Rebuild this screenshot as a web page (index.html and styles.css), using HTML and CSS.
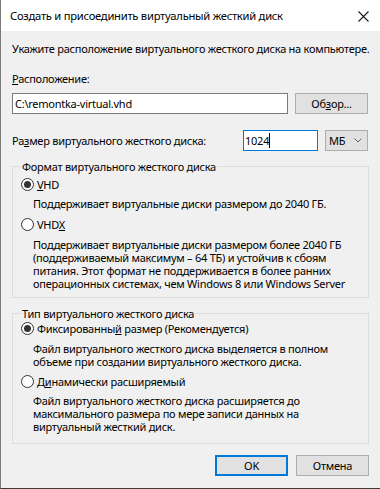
FILE: index.html
```html
<!DOCTYPE html>
<html lang="ru">
<head>
  <meta charset="UTF-8" />
  <title>Создать и присоединить виртуальный жесткий диск</title>
  <link rel="stylesheet" href="styles.css">
</head>
<body>
  <div class="window">
    <div class="titlebar">
      <span class="title">Создать и присоединить виртуальный жесткий диск</span>
      <svg class="close" width="11" height="11" viewBox="0 0 11 11">
        <path d="M0.5 0.5 L10.5 10.5 M10.5 0.5 L0.5 10.5" stroke="#1a1a1a" stroke-width="1.1" fill="none"/>
      </svg>
    </div>

    <div class="content">
      <p class="intro">Укажите расположение виртуального жесткого диска на компьютере.</p>

      <label class="field-label"><u>Р</u>асположение:</label>
      <div class="path-row">
        <div class="textbox path">C:\remontka-virtual.vhd</div>
        <button class="btn">Об<u>з</u>ор...</button>
      </div>

      <div class="size-row">
        <span class="size-label">Ра<u>з</u>мер виртуального жесткого диска:</span>
        <div class="textbox size focused">1024<span class="caret"></span></div>
        <div class="combo">
          <span>МБ</span>
          <svg width="8" height="5" viewBox="0 0 8 5"><path d="M0.5 0.5 L4 4 L7.5 0.5" stroke="#606060" fill="none"/></svg>
        </div>
      </div>

      <fieldset class="group format">
        <legend>Формат виртуального жесткого диска</legend>
        <div class="option first">
          <span class="radio checked"></span><span><u>V</u>HD</span>
        </div>
        <p class="desc d1">Поддерживает виртуальные диски размером до 2040 ГБ.</p>
        <div class="option second">
          <span class="radio"></span><span>VHD<u>X</u></span>
        </div>
        <p class="desc d2">Поддерживает виртуальные диски размером более 2040 ГБ<br>(поддерживаемый максимум – 64 ТБ) и устойчив к сбоям<br>питания. Этот формат не поддерживается в более ранних<br>операционных системах, чем Windows 8 или Windows Server</p>
      </fieldset>

      <fieldset class="group type">
        <legend>Тип виртуального жесткого диска</legend>
        <div class="option first">
          <span class="radio checked"></span><span>Фиксированны<u>й</u> размер (Рекомендуется)</span>
        </div>
        <p class="desc d1">Файл виртуального жесткого диска выделяется в полном<br>объеме при создании виртуального жесткого диска.</p>
        <div class="option second">
          <span class="radio"></span><span>Д<u>и</u>намически расширяемый</span>
        </div>
        <p class="desc d2">Файл виртуального жесткого диска расширяется до<br>максимального размера по мере записи данных на<br>виртуальный жесткий диск.</p>
      </fieldset>

      <div class="actions">
        <button class="btn default">OK</button>
        <button class="btn">Отмена</button>
      </div>
    </div>
  </div>
</body>
</html>
```

FILE: styles.css
```css
* {
  box-sizing: border-box;
}
html, body {
  margin: 0;
  padding: 0;
}
body {
  font-family: "Noto Sans", "Open Sans", sans-serif;
  font-size: 11px;
  line-height: 13px;
  letter-spacing: -0.25px;
  color: #000;
  background: #f0f0f0;
  white-space: nowrap;
}
u {
  text-decoration-thickness: 1px;
  text-underline-offset: 1px;
}
.window {
  width: 380px;
  height: 489px;
  background: #f0f0f0;
  border-left: 1px solid #7a7a7a;
  border-bottom: 1px solid #3a3a3a;
  display: flex;
  flex-direction: column;
  overflow: hidden;
}
.titlebar {
  flex: none;
  height: 31px;
  background: #fff;
  display: flex;
  align-items: center;
  justify-content: space-between;
  padding: 0 11px 0 9px;
}
.title {
  font-size: 11.2px;
}
.close {
  margin-top: 1px;
}
.content {
  padding: 11px 11px 0 11px;
}
.intro {
  margin: 0;
}
.field-label {
  display: block;
  margin-top: 17px;
}
.path-row {
  display: flex;
  gap: 7px;
  margin-top: 8px;
  height: 21px;
}
.textbox {
  background: #fff;
  border: 1px solid #7a7a7a;
  height: 21px;
  padding: 0 2px;
  display: flex;
  align-items: center;
}
.textbox.focused {
  border-color: #0078d7;
}
.path {
  width: 276px;
}
.btn {
  font: inherit;
  letter-spacing: inherit;
  color: #000;
  background: #e1e1e1;
  border: 1px solid #adadad;
  width: 73px;
  height: 21px;
  padding: 0;
  line-height: 13px;
}
.btn.default {
  border: 2px solid #0078d7;
}
.size-row {
  display: flex;
  align-items: center;
  margin-top: 16px;
  height: 21px;
}
.size-label {
  width: 231px;
}
.size {
  width: 75px;
  padding-left: 1px;
}
.caret {
  display: inline-block;
  width: 1px;
  height: 15px;
  background: #000;
}
.combo {
  margin-left: 7px;
  width: 43px;
  height: 21px;
  background: #e1e1e1;
  border: 1px solid #adadad;
  display: flex;
  align-items: center;
  justify-content: space-between;
  padding: 0 5px 0 3px;
}
.group {
  margin: 0;
  padding: 0 8px 7px;
  border: 1px solid #dcdcdc;
  min-width: 0;
}
.group legend {
  padding: 0 1px;
  line-height: 13px;
}
.format {
  margin-top: 9px;
}
.type {
  margin-top: 9px;
  padding-bottom: 10px;
}
.option {
  display: flex;
  align-items: center;
  gap: 3px;
  height: 13px;
}
.radio {
  width: 13px;
  height: 13px;
  border: 1px solid #333;
  border-radius: 50%;
  background: #fff;
  display: flex;
  align-items: center;
  justify-content: center;
}
.radio.checked::after {
  content: "";
  width: 7px;
  height: 7px;
  border-radius: 50%;
  background: #333;
}
.desc {
  margin: 0;
  padding-left: 12px;
}
.format .first { margin-top: 5px; }
.format .d1 { margin-top: 6px; }
.format .second { margin-top: 8px; }
.format .d2 { margin-top: 7px; }
.type .first { margin-top: 2px; }
.type .d1 { margin-top: 7px; }
.type .second { margin-top: 7px; }
.type .d2 { margin-top: 6px; }
.actions {
  display: flex;
  justify-content: flex-end;
  gap: 8px;
  margin-top: 11px;
}
```
